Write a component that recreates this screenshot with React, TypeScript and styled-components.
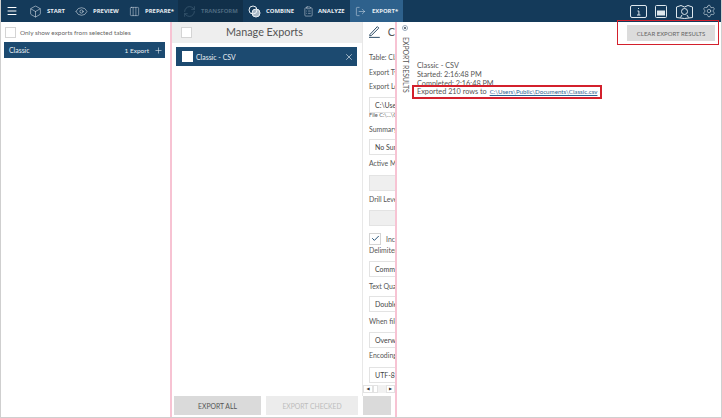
import React from "react";
import styled, { createGlobalStyle } from "styled-components";
import { Box, Eye, Columns3, RefreshCw, ClipboardList, LogOut, Plus, X, Check, Settings, Menu } from "lucide-react";

const Global = createGlobalStyle`
  html, body { margin: 0; padding: 0; background: #fff; }
  #root { width: 722px; height: 418px; overflow: hidden; }
  * { box-sizing: border-box; }
`;

const Win = styled.div`
  width: 722px; height: 418px; display: flex; flex-direction: column;
  font-family: Lato, "Open Sans", sans-serif; color: #555; background: #fff;
  border: 1px solid #cfcfcf; border-top: 0; position: relative; overflow: hidden;
`;
const Header = styled.header`
  height: 22px; flex: none; background: #143a5a; display: flex; align-items: stretch; padding-left: 5px; color: #fff;
`;
const Burger = styled.div`
  width: 18px; display: flex; align-items: center; color: #fff;
`;
const Nav = styled.div<{ $w: number; $active?: boolean; $dim?: boolean; $dark?: boolean; $gap?: number }>`
  width: ${p => p.$w}px; flex: none; display: flex; align-items: center; gap: ${p => p.$gap ?? 5}px; padding-left: 5px;
  background: ${p => p.$active ? "#2e618c" : p.$dark ? "#11304a" : "transparent"};
  color: ${p => p.$dim ? "#4d6a80" : "#e8eef3"};
  font-family: "Open Sans", sans-serif; font-size: 5.9px; font-weight: 700; white-space: nowrap;
`;
const Spacer = styled.div` flex: 1; `;
const Tools = styled.div`
  display: flex; align-items: center; gap: 8px; padding-right: 5px; color: #dfe8ee;
`;
const Body = styled.div` flex: 1; display: flex; min-height: 0; `;
const Left = styled.aside`
  width: 171px; flex: none; border-right: 2px solid #f7c3d3; padding: 0 0 0 3px;
`;
const OnlyRow = styled.label`
  height: 20px; display: flex; align-items: center; gap: 4px; padding-left: 1px; font-size: 6.4px; color: #666; white-space: nowrap;
`;
const Tick = styled.span<{ $s?: number; $white?: boolean }>`
  width: ${p => p.$s ?? 11}px; height: ${p => p.$s ?? 11}px; flex: none; background: #fff; border: 1px solid ${p => p.$white ? "#fff" : "#d4d4d4"};
  display: inline-flex; align-items: center; justify-content: center;
`;
const TableRow = styled.div`
  height: 16px; width: 161px; background: #1c4a70; color: #eaf0f4; display: flex; align-items: center; justify-content: space-between; padding: 0 2px 0 5px; font-size: 6.9px;
`;
const RowEnd = styled.span` display: flex; align-items: center; gap: 5px; font-size: 6.5px; `;
const Middle = styled.section`
  width: 223px; flex: none; display: flex; flex-direction: column; position: relative; overflow: hidden;
`;
const Columns = styled.div` flex: 1; min-height: 0; display: flex; `;
const Manage = styled.div`
  width: 190px; flex: none; display: flex; flex-direction: column;
`;
const ManageHead = styled.div`
  height: 21px; flex: none; background: #eeeeee; display: flex; align-items: center; padding-left: 9px;
`;
const ManageTitle = styled.span`
  font-size: 10.8px; line-height: 15px; color: #555; margin: 0 0 3px 34px;
`;
const ExportRow = styled.div`
  margin: 4px 0 0 4px; height: 19px; width: 181px; background: #1c4a70; display: flex; align-items: center; padding: 0 3px 0 6px; gap: 3px; color: #eaf0f4; font-size: 6.9px;
`;
const Grow = styled.span` flex: 1; `;
const Editor = styled.div`
  flex: 1; border-left: 1px solid #e8e8e8; padding: 0 0 0 6px; overflow: hidden; min-width: 0; white-space: nowrap;
`;
const EdHead = styled.div`
  height: 21px; display: flex; align-items: center; gap: 8px; padding-bottom: 3px; font-size: 10.8px; color: #555; margin-bottom: 9px;
`;
const Lbl = styled.div<{ $top?: number; $sm?: boolean }>`
  font-size: ${p => p.$sm ? 5.6 : 6.9}px; line-height: 10px; height: 10px; color: #555; margin-top: ${p => p.$top ?? 0}px;
`;
const Field = styled.div<{ $top?: number; $off?: boolean }>`
  height: 16px; width: 60px; margin-top: ${p => p.$top ?? 4}px; border: 1px solid #e3e3e3; background: ${p => p.$off ? "#efefef" : "#fff"};
  font-size: 7px; color: #444; padding-left: 5px; line-height: 14px;
`;
const CheckLine = styled.div`
  margin-top: 6px; display: flex; align-items: center; gap: 5px; font-size: 6.9px; height: 13px; color: #555;
`;
const Scroll = styled.div`
  margin: 2px 0 0 -6px; height: 8px; width: 32px; display: flex; align-items: center; background: #f1f1f1;
`;
const ScrollBtn = styled.span<{ $w: number }>`
  width: ${p => p.$w}px; height: 8px; background: #fff; border: 1px solid #e2e2e2; display: flex; align-items: center; justify-content: center;
  color: #333; font: 4px "DejaVu Sans", sans-serif; line-height: 1;
`;
const Footer = styled.div`
  height: 21px; flex: none; display: flex; gap: 5px; padding-left: 2px;
`;
const FootBtn = styled.button<{ $off?: boolean; $w: number }>`
  width: ${p => p.$w}px; height: 19px; border: 0; padding: 0; background: ${p => p.$off ? "#ececec" : "#dadada"}; color: ${p => p.$off ? "#bcbcbc" : "#555"};
  font: 400 6.8px Lato, sans-serif; text-transform: uppercase;
`;
const Results = styled.section`
  flex: 1; display: flex; border-left: 2px solid #f7c3d3; position: relative; min-width: 0;
`;
const Tab = styled.div`
  width: 16px; flex: none; display: flex; flex-direction: column; align-items: center; padding-top: 3px; gap: 6px;
`;
const Radio = styled.span`
  width: 6px; height: 6px; border-radius: 50%; border: 1px solid #9ab; display: flex; align-items: center; justify-content: center;
  &::after { content: ""; width: 2px; height: 2px; border-radius: 50%; background: #345; }
`;
const TabText = styled.span`
  writing-mode: vertical-rl; font-size: 6.9px; line-height: 9px; color: #555; white-space: nowrap;
`;
const Log = styled.div`
  margin: 40px 0 0 4px; font-size: 7.3px; line-height: 8.8px; color: #555; white-space: nowrap;
`;
const FileLink = styled.a`
  color: #2e6593; text-decoration: underline; font-size: 6.2px; margin-left: 1px;
`;
const ClearBtn = styled.button`
  position: absolute; top: 3px; right: 6px; width: 88px; height: 16px; border: 0; padding: 0; background: #dcdcdc; color: #666;
  font: 400 6px Lato, sans-serif; white-space: nowrap;
`;
const Mark = styled.div<{ $x: number; $y: number; $w: number; $h: number; $t: number }>`
  position: absolute; left: ${p => p.$x}px; top: ${p => p.$y}px; width: ${p => p.$w}px; height: ${p => p.$h}px; border: ${p => p.$t}px solid #d3202c; pointer-events: none;
`;

const I = { size: 13, strokeWidth: 1 };
const S = { size: 11, strokeWidth: 1 };

export default function App() {
  return (
    <Win>
      <Global />
      <Header>
        <Burger><Menu size={12} strokeWidth={2} /></Burger>
        <Nav $w={46}><Box {...I} />START</Nav>
        <Nav $w={54}><Eye {...I} />PREVIEW</Nav>
        <Nav $w={54}><Columns3 {...S} />PREPARE*</Nav>
        <Nav $w={65} $dim $dark><RefreshCw {...I} />TRANSFORM</Nav>
        <Nav $w={55}><svg width="13" height="13" viewBox="0 0 13 13" fill="none" stroke="currentColor"><circle cx="5" cy="5" r="4" /><circle cx="8" cy="8" r="4" fill="currentColor" fillOpacity=".7" /></svg>COMBINE</Nav>
        <Nav $w={52} $gap={4}><ClipboardList {...S} />ANALYZE</Nav>
        <Nav $w={53} $active $gap={6}><LogOut size={11} strokeWidth={1} />EXPORT*</Nav>
        <Spacer />
        <Tools>
          <svg width="17" height="13" viewBox="0 0 17 13" fill="none" stroke="currentColor"><rect x=".5" y=".5" width="16" height="12" rx="1.5" /><path d="M8.500 3v1M7.500 6h1.400v4M7 10h3.400" /></svg>
          <svg width="12" height="13" viewBox="0 0 12 13" fill="none" stroke="currentColor"><rect x=".5" y=".5" width="11" height="12" rx="1" /><rect x="2.500" y="6" width="7" height="4" fill="currentColor" /></svg>
          <svg width="19" height="15" viewBox="0 0 19 15" fill="none" stroke="currentColor"><path d="M1.500 3L6 1.500l3.500 1.500L13 1.500 17.500 3v10.500L9.500 14.500 1.500 13.500z" /><circle cx="9.500" cy="7.500" r="3" /><path d="M7 11l-1.500 2.500M12 11l1.500 2.500" /></svg>
          <Settings size={14} strokeWidth={1} />
        </Tools>
      </Header>
      <Body>
        <Left>
          <OnlyRow><Tick />Only show exports from selected tables</OnlyRow>
          <TableRow>Classic<RowEnd>1 Export<Plus size={9} strokeWidth={1.500} /></RowEnd></TableRow>
        </Left>
        <Middle>
          <Columns>
            <Manage>
              <ManageHead><Tick /><ManageTitle>Manage Exports</ManageTitle></ManageHead>
              <ExportRow><Tick $white />Classic - CSV<Grow /><X size={10} strokeWidth={1.500} /></ExportRow>
            </Manage>
            <Editor>
              <EdHead>
                <svg width="11" height="13" viewBox="0 0 11 13" fill="none" stroke="#2b4a63"><path d="M1 9.500L8.500 1.500l1.500 1.500L2.500 10.500 .8 11z" /><path d="M0 12.500h11" /></svg>
                C
              </EdHead>
              <Lbl $top={1}>Table: Classic</Lbl>
              <Lbl $top={5}>Export Type</Lbl>
              <Lbl $top={4}>Export Location</Lbl>
              <Field $top={6}>C:\Users\Public</Field>
              <Lbl $sm $top={-3}>File C:\...\Classic</Lbl>
              <Lbl $top={4}>Summary</Lbl>
              <Field $top={5}>No Summary</Field>
              <Lbl $top={3}>Active Measure</Lbl>
              <Field $off $top={7} />
              <Lbl $top={3}>Drill Level</Lbl>
              <Field $off $top={6} />
              <CheckLine><Tick $s={12}><Check size={9} color="#1c4a70" strokeWidth={2.500} /></Tick>Include</CheckLine>
              <Lbl>Delimiter</Lbl>
              <Field $top={6}>Comma</Field>
              <Lbl $top={4}>Text Qualifier</Lbl>
              <Field $top={5}>Double</Field>
              <Lbl $top={4}>When file exists</Lbl>
              <Field $top={6}>Overwrite</Field>
              <Lbl $top={2}>Encoding</Lbl>
              <Field $top={7}>UTF-8</Field>
              <Scroll><ScrollBtn $w={10}>◀</ScrollBtn><ScrollBtn $w={5} /><Grow /><ScrollBtn $w={9}>▶</ScrollBtn></Scroll>
            </Editor>
          </Columns>
          <Footer>
            <FootBtn $w={87}>Export All</FootBtn>
            <FootBtn $w={92} $off>Export Checked</FootBtn>
            <FootBtn $w={28} />
          </Footer>
        </Middle>
        <Results>
          <Tab><Radio /><TabText>EXPORT RESULTS</TabText></Tab>
          <Log>
            <div>Classic - CSV</div>
            <div>Started: 2:16:48 PM</div>
            <div>Completed: 2:16:48 PM</div>
            <div>Exported 210 rows to <FileLink>C:\Users\Public\Documents\Classic.csv</FileLink></div>
          </Log>
          <ClearBtn>CLEAR EXPORT RESULTS</ClearBtn>
        </Results>
      </Body>
      <Mark $x={411} $y={85} $w={190} $h={14} $t={2} />
      <Mark $x={616} $y={20} $w={102} $h={25} $t={1} />
    </Win>
  );
}
